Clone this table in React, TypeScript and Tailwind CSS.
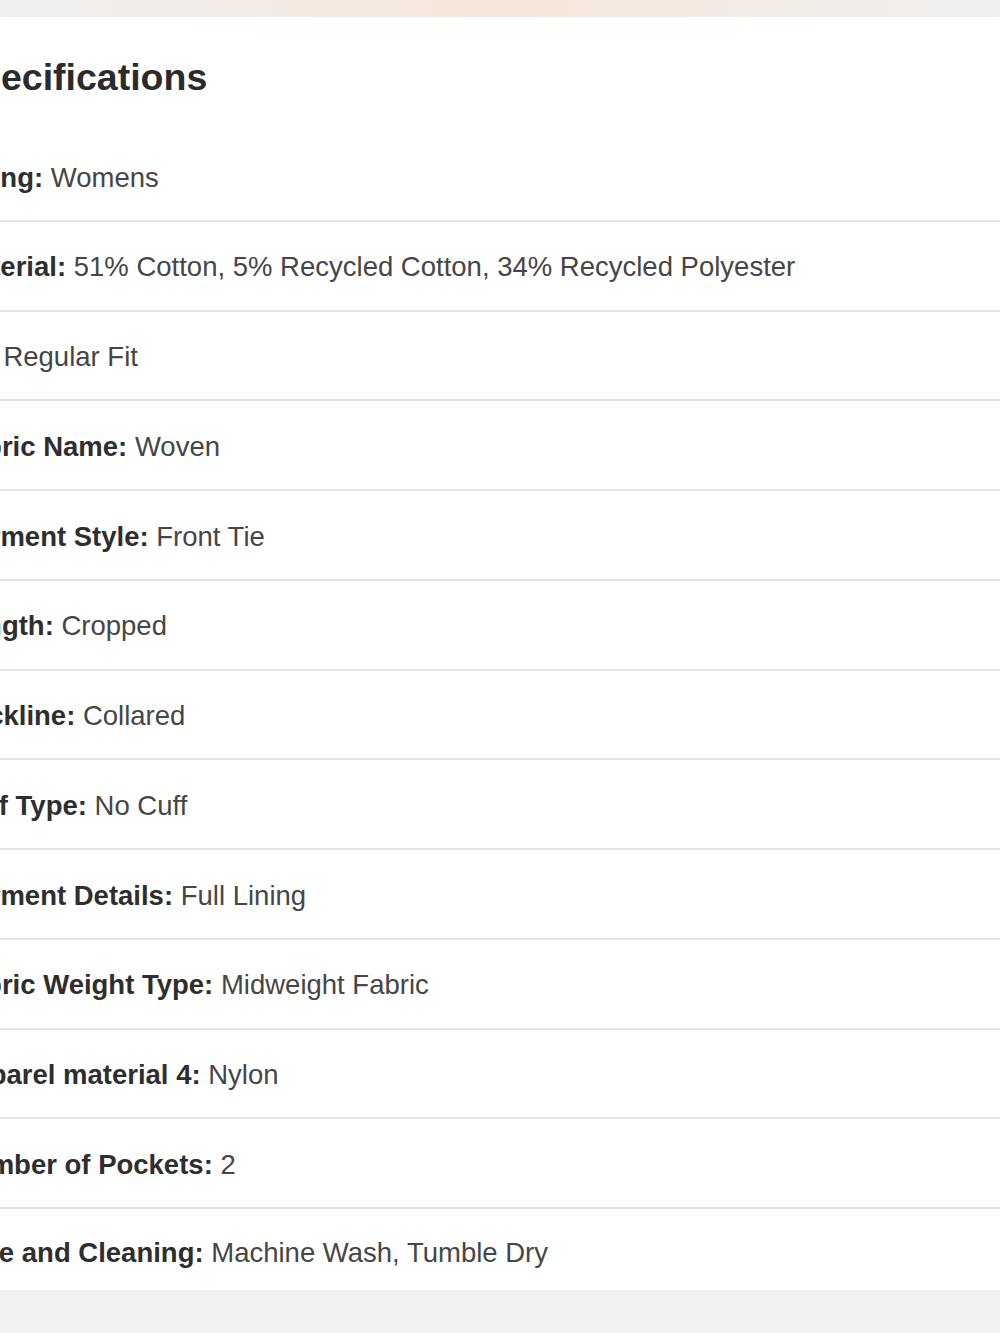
const specs: [string, string][] = [
  ['Sizing', 'Womens'],
  ['Material', '51% Cotton, 5% Recycled Cotton, 34% Recycled Polyester'],
  ['Fit', 'Regular Fit'],
  ['Fabric Name', 'Woven'],
  ['Garment Style', 'Front Tie'],
  ['Length', 'Cropped'],
  ['Neckline', 'Collared'],
  ['Cuff Type', 'No Cuff'],
  ['Garment Details', 'Full Lining'],
  ['Fabric Weight Type', 'Midweight Fabric'],
  ['Apparel material 4', 'Nylon'],
  ['Number of Pockets', '2'],
  ['Care and Cleaning', 'Machine Wash, Tumble Dry'],
];

export default function App() {
  return (
    <div className="flex h-[1333px] w-[1000px] flex-col overflow-hidden bg-[#f0f0f0] font-['Liberation_Sans',Arial,sans-serif]">
      {/* top strip */}
      <div className="h-[17px] bg-gradient-to-r from-[#f0f0f0] via-[#f6e6da] to-[#f0f0f0]" />

      {/* card */}
      <div className="flex h-[1273px] flex-col overflow-hidden bg-white">
        <div className="-ml-[47px] flex h-[115px] items-center pt-[6px]">
          <h2 className="text-[37.5px] font-bold leading-none text-[#2b2b2b]">Specifications</h2>
        </div>

        <ul className="flex flex-col">
          {specs.map(([label, value], i) => {
            const last = i === specs.length - 1;
            return (
              <li
                key={label}
                className={
                  last
                    ? 'flex h-[81px] items-center pt-[7px]'
                    : 'flex h-[89.75px] items-center border-b-2 border-[#e3e3e3] pt-[3px]'
                }
              >
                <p className="-ml-[47px] whitespace-nowrap text-[27.5px] leading-none text-[#464646]">
                  <span className="font-bold text-[#2e2e2e]">{label}:</span> {value}
                </p>
              </li>
            );
          })}
        </ul>
      </div>
    </div>
  );
}
